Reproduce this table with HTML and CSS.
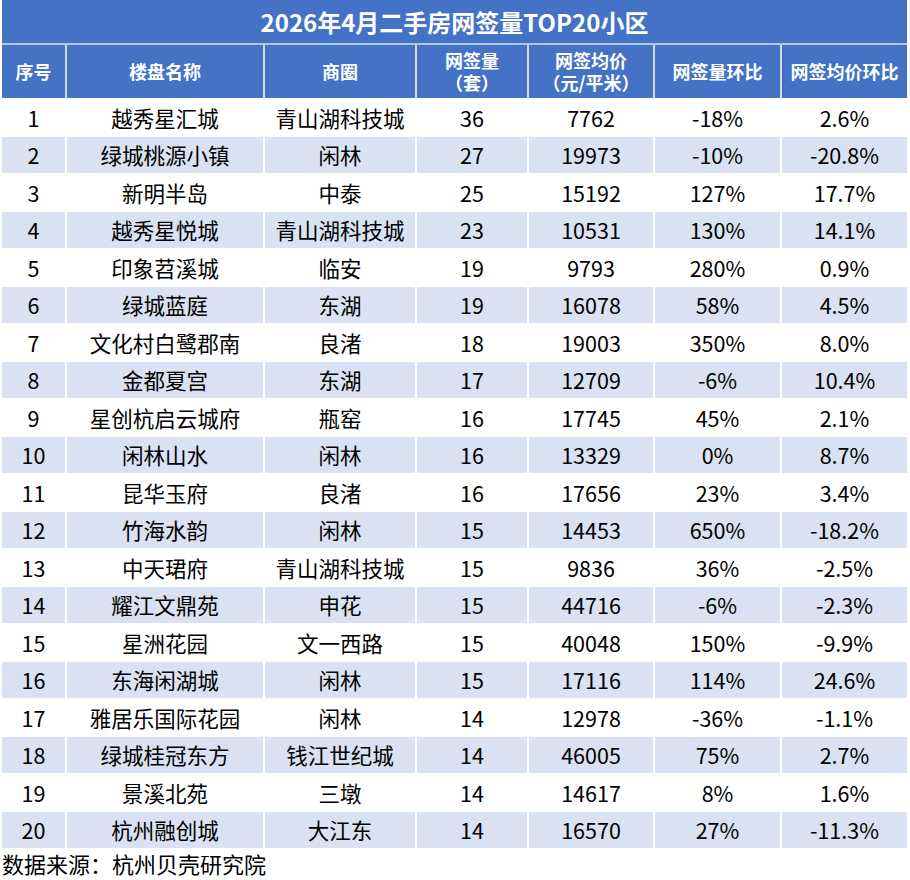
FILE: index.html
```html
<!DOCTYPE html>
<html lang="zh-CN">
<head>
<meta charset="utf-8">
<title>2026年4月二手房网签量TOP20小区</title>
<link rel="stylesheet" href="styles.css">
</head>
<body>
<div class="sheet">
  <div class="title">2026年4月二手房网签量TOP20小区</div>
  <div class="row head">
    <div class="c">序号</div>
    <div class="c">楼盘名称</div>
    <div class="c">商圈</div>
    <div class="c two">网签量<br>（套）</div>
    <div class="c two">网签均价<br>（元/平米）</div>
    <div class="c">网签量环比</div>
    <div class="c">网签均价环比</div>
  </div>
  <div class="row"><div class="c">1</div><div class="c">越秀星汇城</div><div class="c">青山湖科技城</div><div class="c">36</div><div class="c">7762</div><div class="c">-18%</div><div class="c">2.6%</div></div>
  <div class="row band"><div class="c">2</div><div class="c">绿城桃源小镇</div><div class="c">闲林</div><div class="c">27</div><div class="c">19973</div><div class="c">-10%</div><div class="c">-20.8%</div></div>
  <div class="row"><div class="c">3</div><div class="c">新明半岛</div><div class="c">中泰</div><div class="c">25</div><div class="c">15192</div><div class="c">127%</div><div class="c">17.7%</div></div>
  <div class="row band"><div class="c">4</div><div class="c">越秀星悦城</div><div class="c">青山湖科技城</div><div class="c">23</div><div class="c">10531</div><div class="c">130%</div><div class="c">14.1%</div></div>
  <div class="row"><div class="c">5</div><div class="c">印象苕溪城</div><div class="c">临安</div><div class="c">19</div><div class="c">9793</div><div class="c">280%</div><div class="c">0.9%</div></div>
  <div class="row band"><div class="c">6</div><div class="c">绿城蓝庭</div><div class="c">东湖</div><div class="c">19</div><div class="c">16078</div><div class="c">58%</div><div class="c">4.5%</div></div>
  <div class="row"><div class="c">7</div><div class="c">文化村白鹭郡南</div><div class="c">良渚</div><div class="c">18</div><div class="c">19003</div><div class="c">350%</div><div class="c">8.0%</div></div>
  <div class="row band"><div class="c">8</div><div class="c">金都夏宫</div><div class="c">东湖</div><div class="c">17</div><div class="c">12709</div><div class="c">-6%</div><div class="c">10.4%</div></div>
  <div class="row"><div class="c">9</div><div class="c">星创杭启云城府</div><div class="c">瓶窑</div><div class="c">16</div><div class="c">17745</div><div class="c">45%</div><div class="c">2.1%</div></div>
  <div class="row band"><div class="c">10</div><div class="c">闲林山水</div><div class="c">闲林</div><div class="c">16</div><div class="c">13329</div><div class="c">0%</div><div class="c">8.7%</div></div>
  <div class="row"><div class="c">11</div><div class="c">昆华玉府</div><div class="c">良渚</div><div class="c">16</div><div class="c">17656</div><div class="c">23%</div><div class="c">3.4%</div></div>
  <div class="row band"><div class="c">12</div><div class="c">竹海水韵</div><div class="c">闲林</div><div class="c">15</div><div class="c">14453</div><div class="c">650%</div><div class="c">-18.2%</div></div>
  <div class="row"><div class="c">13</div><div class="c">中天珺府</div><div class="c">青山湖科技城</div><div class="c">15</div><div class="c">9836</div><div class="c">36%</div><div class="c">-2.5%</div></div>
  <div class="row band"><div class="c">14</div><div class="c">耀江文鼎苑</div><div class="c">申花</div><div class="c">15</div><div class="c">44716</div><div class="c">-6%</div><div class="c">-2.3%</div></div>
  <div class="row"><div class="c">15</div><div class="c">星洲花园</div><div class="c">文一西路</div><div class="c">15</div><div class="c">40048</div><div class="c">150%</div><div class="c">-9.9%</div></div>
  <div class="row band"><div class="c">16</div><div class="c">东海闲湖城</div><div class="c">闲林</div><div class="c">15</div><div class="c">17116</div><div class="c">114%</div><div class="c">24.6%</div></div>
  <div class="row"><div class="c">17</div><div class="c">雅居乐国际花园</div><div class="c">闲林</div><div class="c">14</div><div class="c">12978</div><div class="c">-36%</div><div class="c">-1.1%</div></div>
  <div class="row band"><div class="c">18</div><div class="c">绿城桂冠东方</div><div class="c">钱江世纪城</div><div class="c">14</div><div class="c">46005</div><div class="c">75%</div><div class="c">2.7%</div></div>
  <div class="row"><div class="c">19</div><div class="c">景溪北苑</div><div class="c">三墩</div><div class="c">14</div><div class="c">14617</div><div class="c">8%</div><div class="c">1.6%</div></div>
  <div class="row band"><div class="c">20</div><div class="c">杭州融创城</div><div class="c">大江东</div><div class="c">14</div><div class="c">16570</div><div class="c">27%</div><div class="c">-11.3%</div></div>
</div>
<div class="source">数据来源：杭州贝壳研究院</div>
</body>
</html>
```

FILE: styles.css
```css
html, body {
  margin: 0;
  padding: 0;
  background: #ffffff;
}
body {
  font-family: "Noto Sans CJK SC", "Microsoft YaHei", sans-serif;
  color: #000000;
}
.sheet {
  margin-left: 2px;
  width: 905px;
  display: flex;
  flex-direction: column;
  gap: 2px;
}
.title {
  height: 43px;
  background: #4472c4;
  border-bottom: 2px solid #b4c6e7;
  color: #ffffff;
  font-weight: 700;
  font-size: 24px;
  line-height: 43px;
  text-align: center;
  margin-bottom: -2px;
}
.row {
  display: grid;
  grid-template-columns: 63px 196px 150px 110px 124px 125px 125px;
  column-gap: 2px;
  height: 35.5px;
  font-size: 21.5px;
}
.row .c {
  display: flex;
  align-items: center;
  justify-content: center;
  text-align: center;
  white-space: nowrap;
  line-height: 1;
}
.row.band .c {
  background: #d9e1f2;
}
.row.head {
  height: 52.5px;
  background: #d9d9d9;
  font-size: 18px;
  font-weight: 700;
  color: #ffffff;
}
.row.head .c {
  background: #4472c4;
}
.row.head .two {
  line-height: 22px;
}
.source {
  margin-left: 2px;
  font-size: 22px;
  line-height: 30px;
  height: 32px;
  color: #000000;
}
```
